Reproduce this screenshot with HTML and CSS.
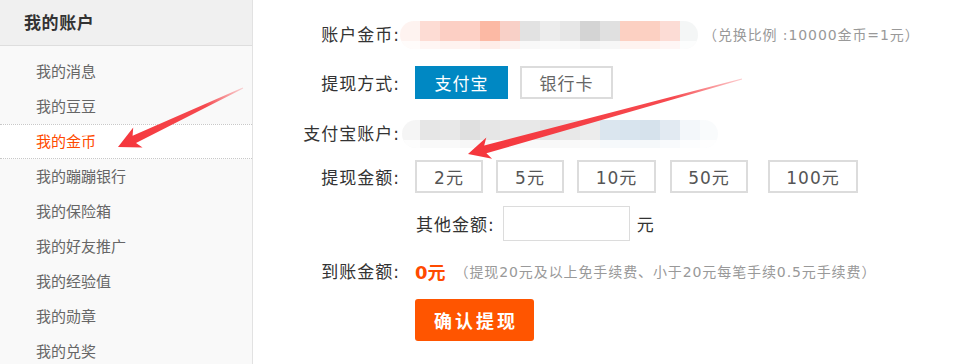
FILE: index.html
```html
<!DOCTYPE html>
<html lang="zh-CN">
<head>
<meta charset="utf-8">
<title>我的金币</title>
<link rel="stylesheet" href="styles.css">
</head>
<body>
<div class="page">
  <aside class="sidebar">
    <div class="side-title">我的账户</div>
    <ul class="side-menu">
      <li>我的消息</li>
      <li>我的豆豆</li>
      <li class="active">我的金币</li>
      <li>我的蹦蹦银行</li>
      <li>我的保险箱</li>
      <li>我的好友推广</li>
      <li>我的经验值</li>
      <li>我的勋章</li>
      <li>我的兑奖</li>
    </ul>
  </aside>
  <main class="content">
    <div class="row row-coins">
      <span class="label">账户金币:</span>
      <div class="mosaic mosaic-coins"></div>
      <span class="note note-rate">（兑换比例 :10000金币=1元）</span>
    </div>
    <div class="row row-method">
      <span class="label">提现方式:</span>
      <div class="options">
        <span class="opt selected">支付宝</span>
        <span class="opt">银行卡</span>
      </div>
    </div>
    <div class="row row-account">
      <span class="label">支付宝账户:</span>
      <div class="mosaic mosaic-account"></div>
    </div>
    <div class="row row-amount">
      <span class="label">提现金额:</span>
      <div class="amounts">
        <span class="amt amt-1">2元</span>
        <span class="amt amt-1">5元</span>
        <span class="amt amt-2">10元</span>
        <span class="amt amt-2b">50元</span>
        <span class="amt amt-3">100元</span>
      </div>
    </div>
    <div class="row row-other indent">
      <span class="other-label">其他金额:</span>
      <span class="other-input"></span>
      <span class="unit">元</span>
    </div>
    <div class="row row-receive">
      <span class="label">到账金额:</span>
      <span class="receive-value">0元</span>
      <span class="note note-fee">（提现20元及以上免手续费、小于20元每笔手续0.5元手续费）</span>
    </div>
    <div class="indent">
      <button class="submit" type="button">确认提现</button>
    </div>
  </main>
  <svg class="annotations" width="963" height="364" viewBox="0 0 963 364" aria-hidden="true">
    <defs>
      <linearGradient id="fade1" gradientUnits="userSpaceOnUse" x1="243" y1="88" x2="118" y2="147">
        <stop offset="0" stop-color="#f5363c" stop-opacity="0.2"/>
        <stop offset="0.3" stop-color="#f5363c" stop-opacity="0.9"/>
        <stop offset="1" stop-color="#f5363c"/>
      </linearGradient>
      <linearGradient id="fade2" gradientUnits="userSpaceOnUse" x1="742" y1="79" x2="468" y2="154">
        <stop offset="0" stop-color="#f5363c" stop-opacity="0.25"/>
        <stop offset="0.25" stop-color="#f5363c" stop-opacity="0.9"/>
        <stop offset="1" stop-color="#f5363c"/>
      </linearGradient>
    </defs>
    <polygon fill="url(#fade1)" points="243.2,88.5 136,142.9 142.6,147.6 118,147 133.2,127.6 132.6,135.7 242.8,87.5"/>
    <polygon fill="url(#fade2)" points="742.1,79.5 486.4,153.2 492.1,158.8 468,154 486.3,137.6 484.2,145.4 741.9,78.5"/>
  </svg>
</div>
</body>
</html>
```
FILE: styles.css
```css
html, body {
  margin: 0;
  padding: 0;
  background: #fff;
}

body {
  font-family: "Noto Sans", "Noto Sans CJK SC", sans-serif;
}

.page {
  position: relative;
  display: flex;
  width: 963px;
  height: 364px;
  overflow: hidden;
}

/* ---------- sidebar ---------- */
.sidebar {
  flex: none;
  width: 252px;
  background: #f9f9f9;
  border-right: 1px solid #e2e2e2;
}

.side-title {
  height: 45px;
  line-height: 45px;
  padding-left: 24px;
  background: #f0f0f0;
  border-bottom: 1px solid #dedede;
  font-size: 17px;
  font-weight: bold;
  letter-spacing: 0.6px;
  color: #333;
}

.side-menu {
  list-style: none;
  margin: 0;
  padding: 8px 0 0;
}

.side-menu li {
  box-sizing: border-box;
  height: 35px;
  line-height: 35px;
  padding-left: 36px;
  font-size: 15px;
  color: #666;
}

.side-menu li.active {
  background: #fff;
  color: #ff4a00;
  border-top: 1px dotted #c8c8c8;
  border-bottom: 1px dotted #c8c8c8;
  line-height: 33px;
}

/* ---------- main ---------- */
.content {
  flex: 1;
  padding-top: 17px;
  font-family: "DejaVu Sans", "Noto Sans CJK SC", sans-serif;
  font-size: 17px;
  letter-spacing: 1px;
  color: #333;
}

.row {
  display: flex;
  align-items: center;
  height: 33px;
}

.label {
  flex: none;
  width: 147px;
  text-align: right;
}

.indent {
  padding-left: 162px;
}

.row-coins { margin-bottom: 16px; }
.row-method { margin-bottom: 17px; }
.row-account { margin-bottom: 11px; }
.row-amount { margin-bottom: 13px; }
.row-other { height: 35px; margin-bottom: 13px; }
.row-receive { margin-bottom: 12px; }

.note {
  font-size: 14px;
  letter-spacing: 0.9px;
  color: #999;
}

.note-rate { margin-left: 5px; }
.note-fee { margin-left: 9px; }

/* blurred (mosaic) values */
.mosaic {
  position: relative;
  flex: none;
  height: 28px;
  border-radius: 14px;
  overflow: hidden;
  filter: blur(0.6px);
}

.mosaic::after {
  content: "";
  position: absolute;
  left: 0;
  right: 0;
  bottom: 0;
  height: 8px;
  background: rgba(255, 255, 255, 0.75);
}

.mosaic-coins {
  width: 298px;
  margin-top: 2px;
  background: linear-gradient(to right,
    #fef3f0 0 20px, #fddcd4 20px 40px, #fccfc4 40px 60px, #fdd0c5 60px 80px,
    #fcb9a4 80px 100px, #f8d0c7 100px 120px, #e2e2e2 120px 140px, #ececec 140px 160px,
    #e6e6e6 160px 180px, #d4d4d4 180px 200px, #e0e0e0 200px 220px, #fcd0c2 220px 240px,
    #fcd0c2 240px 260px, #fcdcd5 260px 280px, #f4f6f6 280px 298px);
}

.mosaic-account {
  width: 316px;
  margin-left: 2px;
  margin-top: 2px;
  background: linear-gradient(to right,
    #f5f5f5 0 18px, #e6e6e6 18px 38px, #e8e8e8 38px 58px, #e0e0e0 58px 78px,
    #e6e6e6 78px 98px, #e8e8e8 98px 118px, #e8e8e8 118px 138px, #e4e4e4 138px 158px,
    #e8e8e8 158px 178px, #ececec 178px 198px, #dbe6ef 198px 218px, #d8e4ee 218px 238px,
    #d6e2ec 238px 258px, #e2eaf2 258px 278px, #f3f7fa 278px 298px, #f9fbfc 298px 316px);
}

/* option buttons */
.options {
  display: flex;
  gap: 12px;
  margin-left: 15px;
}

.opt {
  box-sizing: border-box;
  display: flex;
  align-items: center;
  justify-content: center;
  width: 93px;
  height: 33px;
  border: 2px solid #dcdcdc;
  color: #666;
}

.opt.selected {
  background: #0088c3;
  border-color: #0088c3;
  color: #fff;
}

.amounts {
  display: flex;
  margin-left: 15px;
}

.amt {
  box-sizing: border-box;
  display: flex;
  align-items: center;
  justify-content: center;
  height: 33px;
  margin-right: 13px;
  border: 2px solid #dcdcdc;
  color: #555;
}

.amt-1 { width: 68px; }
.amt-2 { width: 79px; margin-right: 14px; }
.amt-2b { width: 78px; margin-right: 20px; }
.amt-3 { width: 90px; }

.other-label {
  margin-left: 1px;
}

.other-input {
  box-sizing: border-box;
  width: 127px;
  height: 35px;
  margin-left: 8px;
  border: 1px solid #dcdcdc;
  background: #fff;
}

.unit {
  margin-left: 7px;
}

.receive-value {
  margin-left: 15px;
  font-size: 18px;
  font-weight: bold;
  letter-spacing: 0;
  color: #ff4a00;
}

.submit {
  display: block;
  width: 119px;
  height: 42px;
  padding: 0 0 0 3px;
  border: 0;
  border-radius: 3px;
  background: #ff5500;
  color: #fff;
  font-family: "Noto Sans CJK SC", sans-serif;
  font-size: 18px;
  font-weight: bold;
  letter-spacing: 3px;
}

/* screenshot annotations */
.annotations {
  position: absolute;
  left: 0;
  top: 0;
  pointer-events: none;
}
```
